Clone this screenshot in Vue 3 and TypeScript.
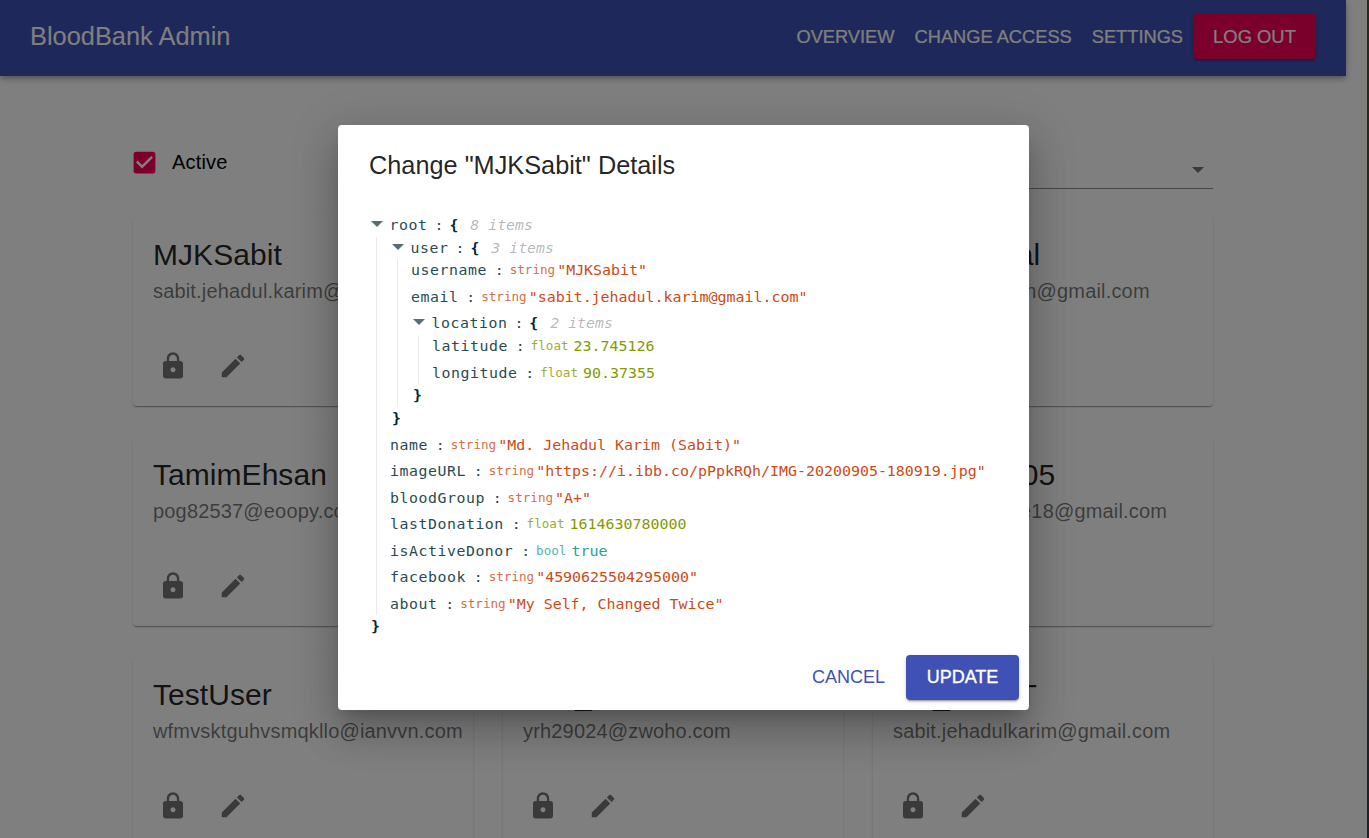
<script setup lang="ts">
interface User { name: string; email: string }
const users: User[] = [
  { name: 'MJKSabit', email: 'sabit.jehadul.karim@gmail.com' },
  { name: 'Rafsan', email: 'rafsan.hossain@gmail.com' },
  { name: 'Abu Kamal', email: 'abu.jamalhasan@gmail.com' },
  { name: 'TamimEhsan', email: 'pog82537@eoopy.com' },
  { name: 'Abc', email: 'abc1234@eoopy.com' },
  { name: 'MJKSabit05', email: 'sabit.jehadul.re18@gmail.com' },
  { name: 'TestUser', email: 'wfmvsktguhvsmqkllo@ianvvn.com' },
  { name: 'ratu_', email: 'yrh29024@zwoho.com' },
  { name: 'MJ_SABIT', email: 'sabit.jehadulkarim@gmail.com' },
]
type Row = { key: string; type: string; value: string; cls: string }
const rows1: Row[] = [
  { key: 'name', type: 'string', value: '"Md. Jehadul Karim (Sabit)"', cls: 'str' },
  { key: 'imageURL', type: 'string', value: '"https://i.ibb.co/pPpkRQh/IMG-20200905-180919.jpg"', cls: 'str' },
  { key: 'bloodGroup', type: 'string', value: '"A+"', cls: 'str' },
  { key: 'lastDonation', type: 'float', value: '1614630780000', cls: 'flt' },
  { key: 'isActiveDonor', type: 'bool', value: 'true', cls: 'bol' },
  { key: 'facebook', type: 'string', value: '"4590625504295000"', cls: 'str' },
  { key: 'about', type: 'string', value: '"My Self, Changed Twice"', cls: 'str' },
]
</script>

<template>
  <div class="page">
    <header class="bar">
      <div class="brand">BloodBank Admin</div>
      <nav class="nav">
        <span class="link">Overview</span>
        <span class="link">Change Access</span>
        <span class="link">Settings</span>
        <span class="logout">Log Out</span>
      </nav>
    </header>
    <main class="main">
      <div class="filters">
        <label class="active">
          <span class="check">
            <svg viewBox="0 0 24 24" width="29" height="29"><path class="checkbox" d="M19 3H5c-1.1 0-2 .9-2 2v14c0 1.1.9 2 2 2h14c1.1 0 2-.9 2-2V5c0-1.1-.9-2-2-2zm-9 14l-5-5 1.41-1.41L10 14.17l7.59-7.59L19 8l-9 9z"/></svg>
          </span>
          <span>Active</span>
        </label>
        <div class="select"><i class="caret"></i></div>
      </div>
      <section class="grid">
        <article v-for="u in users" :key="u.email" class="card">
          <h2 class="uname">{{ u.name }}</h2>
          <p class="mail">{{ u.email }}</p>
          <div class="actions">
            <svg viewBox="0 0 24 24"><path fill="currentColor" d="M18 8h-1V6c0-2.76-2.24-5-5-5S7 3.24 7 6v2H6c-1.1 0-2 .9-2 2v10c0 1.1.9 2 2 2h12c1.1 0 2-.9 2-2V10c0-1.1-.9-2-2-2zm-6 9c-1.1 0-2-.9-2-2s.9-2 2-2 2 .9 2 2-.9 2-2 2zm3.1-9H8.9V6c0-1.71 1.39-3.1 3.1-3.1 1.71 0 3.1 1.39 3.1 3.1v2z"/></svg>
            <svg viewBox="0 0 24 24"><path fill="currentColor" d="M3 17.25V21h3.75L17.81 9.94l-3.75-3.75L3 17.25zM20.71 7.04c.39-.39.39-1.02 0-1.41l-2.34-2.34a.9959.9959 0 0 0-1.41 0l-1.83 1.83 3.75 3.75 1.83-1.83z"/></svg>
          </div>
        </article>
      </section>
    </main>

    <div class="backdrop"></div>
    <div class="strip"></div>

    <div class="dialog">
      <h1 class="title">Change "MJKSabit" Details</h1>
      <div class="json">
        <div class="head"><i class="tri"></i><span class="k">root</span><span class="c">:</span><b class="br">{</b><em class="cnt">8 items</em></div>
        <div class="nest">
          <div class="head"><i class="tri"></i><span class="k">user</span><span class="c">:</span><b class="br">{</b><em class="cnt">3 items</em></div>
          <div class="nest">
            <div class="row"><span class="k">username</span><span class="c">:</span><span class="t str">string</span><span class="v str">"MJKSabit"</span></div>
            <div class="row"><span class="k">email</span><span class="c">:</span><span class="t str">string</span><span class="v str">"sabit.jehadul.karim@gmail.com"</span></div>
            <div class="head"><i class="tri"></i><span class="k">location</span><span class="c">:</span><b class="br">{</b><em class="cnt">2 items</em></div>
            <div class="nest">
              <div class="row lat"><span class="k">latitude</span><span class="c">:</span><span class="t flt">float</span><span class="v flt">23.745126</span></div>
              <div class="row"><span class="k">longitude</span><span class="c">:</span><span class="t flt">float</span><span class="v flt">90.37355</span></div>
            </div>
            <div class="close inner"><b class="br">}</b></div>
          </div>
          <div class="close outer"><b class="br">}</b></div>
          <div v-for="r in rows1" :key="r.key" class="row">
            <span class="k">{{ r.key }}</span><span class="c">:</span><span class="t" :class="r.cls">{{ r.type }}</span><span class="v" :class="r.cls">{{ r.value }}</span>
          </div>
        </div>
        <div class="close"><b class="br">}</b></div>
      </div>
      <div class="foot">
        <span class="cancel">Cancel</span>
        <span class="update">Update</span>
      </div>
    </div>
  </div>
</template>

<style>
html, body { margin: 0; height: 100%; overflow: hidden; background: #fff; }
</style>

<style scoped>
.page {
  position: relative;
  width: 1369px;
  height: 838px;
  overflow: hidden;
  font-family: "Liberation Sans", Arial, sans-serif;
  color: #000;
  background: #fff;
}
.bar {
  width: 1346px;
  height: 76px;
  box-sizing: border-box;
  padding: 0 30px 3px;
  display: flex;
  align-items: center;
  justify-content: space-between;
  background: #3f51b5;
  color: #fff;
  box-shadow: 0 2px 4px -1px rgba(0,0,0,.2), 0 4px 5px rgba(0,0,0,.14), 0 1px 10px rgba(0,0,0,.12);
}
.brand { font-size: 25.4px; }
.nav { display: flex; align-items: center; }
.link {
  text-transform: uppercase;
  font-size: 18.25px;
  padding: 0 10px;
  white-space: nowrap;
  -webkit-text-stroke: .2px currentColor;
}
.logout {
  width: 123px;
  height: 45px;
  display: flex;
  align-items: center;
  justify-content: center;
  text-transform: uppercase;
  font-size: 18.4px;
  -webkit-text-stroke: .2px currentColor;
  border-radius: 4px;
  background: #f50057;
  box-shadow: 0 3px 1px -2px rgba(0,0,0,.2), 0 2px 2px rgba(0,0,0,.14), 0 1px 5px rgba(0,0,0,.12);
}
.main { width: 1080px; margin-left: 133px; }
.filters {
  height: 140px;
  box-sizing: border-box;
  padding-top: 64px;
  display: flex;
  justify-content: space-between;
  align-items: flex-start;
}
.active { display: flex; align-items: center; gap: 15px; font-size: 20px; letter-spacing: .17px; height: 44px; }
.check { width: 24px; height: 29px; display: block; }
.check svg { display: block; margin-left: -3px; }
.checkbox { fill: #f50057; }
.select { width: 300px; height: 48px; border-bottom: 1px solid #8c8c8c; position: relative; flex: none; }
.caret {
  position: absolute;
  right: 9px;
  top: 27px;
  border: 6.5px solid transparent;
  border-top-color: #757575;
  border-bottom: 0;
}
.grid { display: grid; grid-template-columns: repeat(3, 340px); column-gap: 30px; row-gap: 30px; }
.card {
  height: 190px;
  box-sizing: border-box;
  padding: 20px 20px 25px;
  background: #fff;
  border-radius: 4px;
  box-shadow: 0 2px 1px -1px rgba(0,0,0,.2), 0 1px 1px rgba(0,0,0,.14), 0 1px 3px rgba(0,0,0,.12);
  display: flex;
  flex-direction: column;
}
.uname { margin: 0; font-size: 30px; letter-spacing: .05px; font-weight: 400; line-height: 37px; color: rgba(0,0,0,.87); white-space: nowrap; }
.mail { margin: 3px 0 0; font-size: 20px; letter-spacing: .17px; line-height: 30px; color: rgba(0,0,0,.54); white-space: nowrap; }
.actions { margin-top: auto; display: flex; gap: 30px; padding-left: 5px; color: #757575; }
.actions svg { width: 30px; height: 30px; display: block; }
.backdrop { position: absolute; inset: 0; background: rgba(0,0,0,.5); }
.strip {
  position: absolute;
  top: 0;
  right: 0;
  bottom: 0;
  width: 2px;
  background: linear-gradient(to bottom, #2b2b12 0, #2b2b12 680px, #22222a 680px, #22222a 100%);
}
.dialog {
  position: absolute;
  left: 338px;
  top: 125px;
  width: 691px;
  height: 585px;
  box-sizing: border-box;
  background: #fff;
  border-radius: 4px;
  box-shadow: 0 11px 15px -7px rgba(0,0,0,.2), 0 24px 38px 3px rgba(0,0,0,.14), 0 9px 46px 8px rgba(0,0,0,.12);
  display: flex;
  flex-direction: column;
}
.title { margin: 0; padding: 24px 31px 0; font-size: 25.3px; line-height: 33px; font-weight: 400; color: rgba(0,0,0,.87); white-space: nowrap; }
.json {
  margin: 32px 0 0 31px;
  font-family: "DejaVu Sans Mono", monospace;
  font-size: 14.85px;
  line-height: 22px;
  color: #002b36;
  height: 424px;
}
.head, .row, .close { display: flex; align-items: center; white-space: nowrap; }
.head { height: 22.5px; }
.row { height: 26.5px; align-items: flex-start; }
.row.lat { height: 27px; }
.nest > .row:last-child { height: 22px; }
.close { height: 22px; padding-left: 2px; }
.close.inner { height: 23px; }
.close.outer { height: 27px; align-items: flex-start; }
.tri {
  width: 0; height: 0;
  margin: 0 6.5px 0 2px;
  border-left: 6.5px solid transparent;
  border-right: 6.5px solid transparent;
  border-top: 6px solid #586e75;
  position: relative;
  top: -1px;
}
.nest { margin-left: 7px; border-left: 1px solid #ebebeb; padding-left: 13px; }
.k { opacity: .85; letter-spacing: .55px; }
.c { margin: 0 6px 0 7.8px; opacity: .85; }
.head .c { margin-left: 7px; }
.br { font-weight: 700; }
.cnt { margin-left: 12px; color: rgba(0,0,0,.3); }
.t { font-size: 12.6px; margin-right: 2px; opacity: .8; }
.t.flt, .t.bol { margin-right: 5px; }
.v { font-size: 14.95px; }
.str { color: #cb4b16; }
.flt { color: #859900; }
.bol { color: #2aa198; }
.foot { margin-top: auto; display: flex; justify-content: flex-end; align-items: center; padding: 0 10px 10px; height: 45px; }
.cancel { color: #3f51b5; text-transform: uppercase; font-size: 18px; padding: 0 21px; }
.update {
  width: 113px; height: 45px;
  display: flex; align-items: center; justify-content: center;
  background: #3f51b5; color: #fff;
  text-transform: uppercase; font-size: 18px;
  -webkit-text-stroke: .35px currentColor;
  border-radius: 4px;
  box-shadow: 0 3px 1px -2px rgba(0,0,0,.2), 0 2px 2px rgba(0,0,0,.14), 0 1px 5px rgba(0,0,0,.12);
}
</style>
